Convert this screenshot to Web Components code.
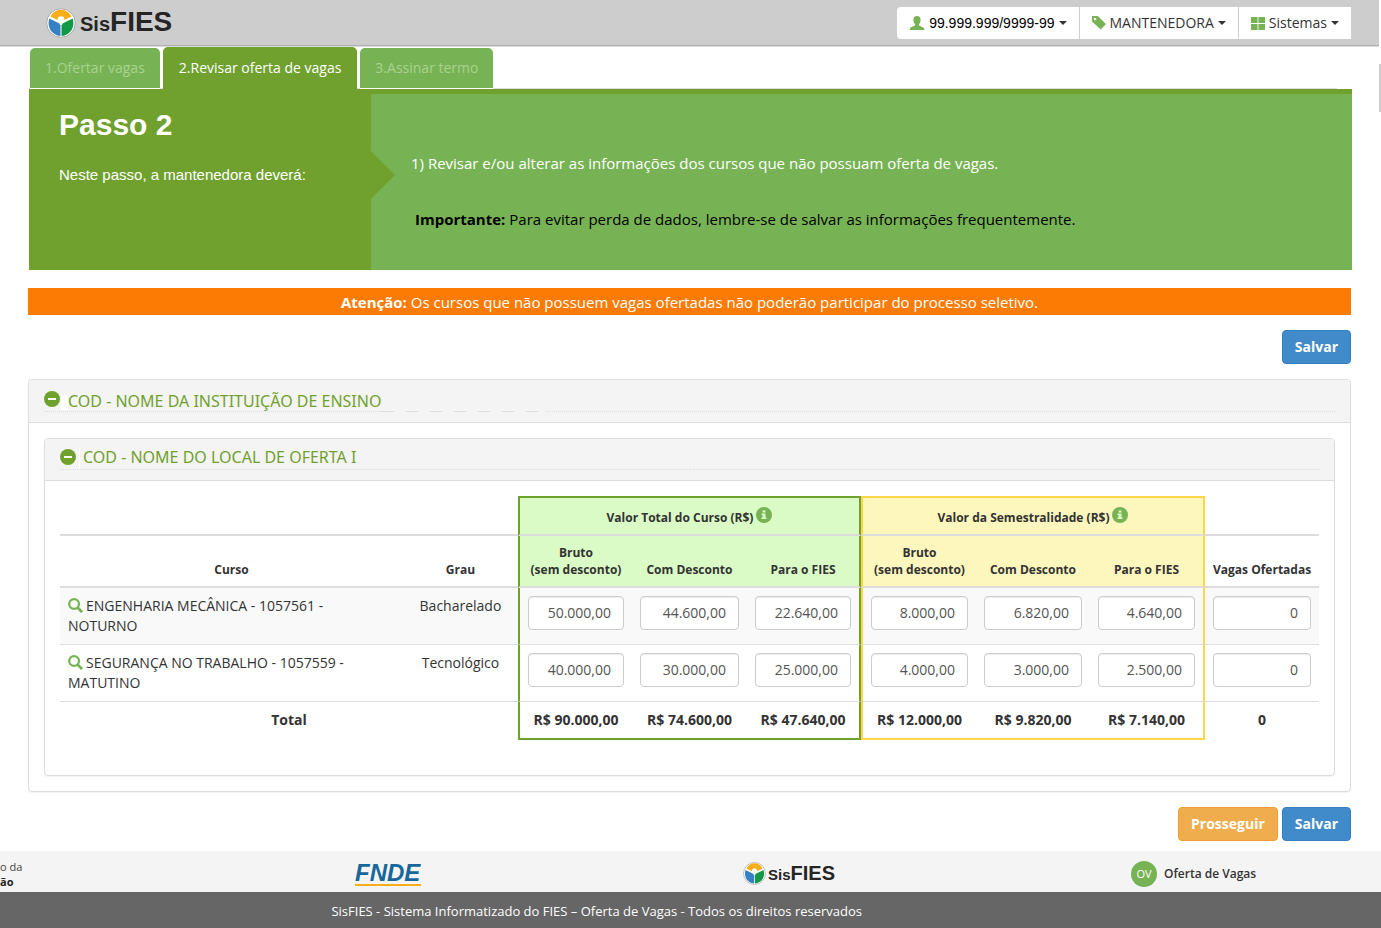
<!DOCTYPE html>
<html lang="pt-BR">
<head>
<meta charset="utf-8">
<title>SisFIES - Oferta de Vagas</title>
<style>
body{margin:0;font:14px/20px "Open Sans",sans-serif;color:#333;background:#fff}
</style>
</head>
<body>
<sis-app></sis-app>
<script>
const define=(name,html,setup)=>{
  const t=document.createElement('template');t.innerHTML=html;
  customElements.define(name,class extends HTMLElement{
    constructor(){super();this.attachShadow({mode:'open'}).append(t.content.cloneNode(true))}
    connectedCallback(){if(setup&&!this.ready){this.ready=true;setup(this,this.shadowRoot)}}
  });
};
const ICONS={
  user:'<path d="M8 1c2.300 0 3.600 1.600 3.600 3.900 0 1.900-.7 3.500-1.700 4.300v1.100c.5.900 4.300 1.500 5.100 3.200.2.500.3 1 .3 1.500H.7c0-.5.1-1 .3-1.500.8-1.700 4.600-2.300 5.100-3.200V9.200C5.100 8.400 4.400 6.800 4.400 4.900 4.400 2.600 5.700 1 8 1z"/>',
  tag:'<path fill-rule="evenodd" d="M0 0h6.500L16 9l-6 6.300L0 6.300zM3.500 1.900a1.500 1.500 0 1 0 0 3 1.500 1.500 0 0 0 0-3z"/>',
  grid:'<path d="M0 1h7.500v7H0zM8.500 1H16v7H8.500zM0 9h7.500v7H0zM8.500 9H16v7H8.500z"/>',
  minus:'<circle cx="8" cy="8" r="8"/><path fill="#fff" d="M4 7h8v2H4z"/>',
  info:'<circle cx="8" cy="8" r="8"/><path fill="#dafac6" d="M6.500 3.500h3v2h-3zM5.500 6.500h4v4h1V12h-5v-1.500h1V8h-1z"/>',
  search:'<circle cx="6.500" cy="6.500" r="5.200" fill="none" stroke="currentColor" stroke-width="2.400"/><path d="M10 10l5 5" fill="none" stroke="currentColor" stroke-width="3"/>'
};
define('sis-icon',`<style>:host{display:inline-block;width:16px;height:16px;color:#77b354}svg{display:block;width:100%;height:100%;fill:currentColor}</style><svg viewBox="0 0 16 16" aria-hidden="true"></svg>`,
 (h,r)=>{r.querySelector('svg').innerHTML=ICONS[h.getAttribute('name')]});

define('sis-logo',`<style>
:host{display:flex;align-items:center;gap:4px;color:#252525;font-family:"Liberation Sans",sans-serif;font-weight:bold;--mark:30px;--small:20px;--big:28px}
svg{width:var(--mark);height:var(--mark);flex:none}
span{font-size:var(--small);line-height:30px;white-space:nowrap}b{font-size:var(--big)}
:host([small]){--mark:23px;--small:15px;--big:20px;gap:2px}
</style><svg viewBox="0 0 30 30" aria-hidden="true"><circle cx="15" cy="15" r="14.300" fill="#fff" stroke="#aaa"/>
<path fill="#f9ae17" d="M4.500 8.500C9-.6 21-.6 25.500 8.500L18.500 12a3.800 3.800 0 0 0-7 0z"/>
<path fill="#3581c4" d="M3.300 10.500 14.500 16v12C6 27.500.5 19.500 3.300 10.500z"/>
<path fill="#119947" d="M26.700 10.500 15.500 16v12C24 27.500 29.500 19.500 26.700 10.500z"/><circle cx="15" cy="11.500" r="3.300" fill="#fff"/><path fill="#fff" d="M12.500 12h5L16 17h-2z"/></svg><span>Sis<b>FIES</b></span>`);

define('sis-menu',`<style>
:host{display:block}
button{display:flex;align-items:center;gap:4px;height:32px;width:100%;padding:0 12px;border:0;background:#fff;color:#333;font:14px/20px "Open Sans",sans-serif;white-space:nowrap}
sis-icon{width:14px;height:14px}
:host([plain]) button{color:#000;font-family:"Liberation Sans",sans-serif}
:host([plain]) sis-icon{width:16px;height:16px}
i{border:4px solid transparent;border-top-color:currentColor;border-bottom:0;color:#333}
</style><button type="button" aria-haspopup="true"><sis-icon></sis-icon><slot></slot><i></i></button>`,
(h,r)=>{const i=document.createElement('sis-icon');i.setAttribute('name',h.getAttribute('icon'));r.querySelector('sis-icon').replaceWith(i)});

define('sis-header',`<style>
:host{display:flex;justify-content:space-between;align-items:center;height:45px;margin-right:2px;padding:0 28px 0 46px;background:#cdcdcd;border-bottom:1px solid #b0b0b0;box-shadow:0 1px #ddd}
nav{display:flex;gap:1px;border-radius:4px 0 0 4px;overflow:hidden}
</style><sis-logo></sis-logo><nav aria-label="Conta"><sis-menu plain icon="user">99.999.999/9999-99</sis-menu><sis-menu icon="tag">MANTENEDORA</sis-menu><sis-menu icon="grid">Sistemas</sis-menu></nav>`);

define('sis-tab',`<style>
:host{display:block}
a{display:block;height:40px;padding:0 15px;line-height:40px;border-radius:5px 5px 0 0;background:#77b354;color:#a9d28f;text-decoration:none;white-space:nowrap}
:host([active]) a{height:42px;padding:0 16px;line-height:42px;background:#70a12f;color:#fff}
</style><a href="#"><slot></slot></a>`);
define('sis-tabs',`<style>
:host{display:flex;align-items:flex-start;gap:3px;height:42px;padding-left:1px;margin-right:15px;box-shadow:inset 0 -1px #ddd}
sis-tab:not([active]){border-top:1px solid #fff;border-bottom:1px solid #fff}
</style><sis-tab>1.Ofertar vagas</sis-tab><sis-tab active>2.Revisar oferta de vagas</sis-tab><sis-tab>3.Assinar termo</sis-tab>`);

define('sis-step',`<style>
:host{display:grid;grid-template-columns:342px 1fr;min-height:176px;border-top:5px solid #70a12f;background:#77b354;color:#fff}
.left{position:relative;background:#70a12f;padding:16px 30px;font:15px/20px "Liberation Sans",sans-serif}
.left::after{content:"";position:absolute;left:100%;top:57px;border:24px solid transparent;border-left-color:#70a12f;border-right:0}
h1{margin:0 0 25px;font-size:30px;line-height:30px}p{margin:0}
.right{padding:59px 40px 0;font-size:15px;line-height:20px}
.note{margin-top:36px;padding-left:4px;color:#000}
</style><div class="left"><h1>Passo 2</h1><p>Neste passo, a mantenedora deverá:</p></div>
<div class="right"><p>1) Revisar e/ou alterar as informações dos cursos que não possuam oferta de vagas.</p><p class="note"><b>Importante:</b> Para evitar perda de dados, lembre-se de salvar as informações frequentemente.</p></div>`);

define('sis-alert',`<style>:host{display:block;padding:4px 0 3px;background:#fb7b05;color:#fff;text-align:center;font-size:15px;line-height:20px}</style><slot></slot>`);

define('sis-button',`<style>:host{display:block}
button{height:34px;padding:0 12px;border:1px solid #357ebd;border-radius:4px;background:#428bca;color:#fff;font:bold 14px/20px "Open Sans",sans-serif}
:host([warn]) button{background:#f0ad4e;border-color:#eea236}</style><button type="button"><slot></slot></button>`);

define('sis-panel',`<style>
:host{display:block;border:1px solid #ddd;border-radius:4px;box-shadow:0 1px 1px rgba(0,0,0,.05);background:#fff}
header{padding:10px 15px;background:#f4f4f4;border-bottom:1px solid #ddd;border-radius:3px 3px 0 0}
h2{display:flex;height:20px;margin:0;color:#70a12f;font:16px/16px "Noto Sans",sans-serif}
h2 i{width:1px;height:20px;margin:0 3px;background:#fff}
sis-icon{color:#70a12f}
.rule{display:flex}
.rule i{flex:1;border-bottom:1px dotted #ddd}
.rule .dash{display:none}
:host([outer]) .rule .lead{flex:0 0 338px}
:host([outer]) .rule .dash{display:block;flex:0 0 164px;border:0;height:1px;background:repeating-linear-gradient(90deg,#ddd 0 12px,transparent 12px 24px)}
:host([outer]) h2{padding-top:1px;line-height:20px}
:host([outer]) h2 i{width:7px;height:15px;margin:4px 0 0 1px}
main{padding:15px}
</style><header><h2><sis-icon name="minus"></sis-icon><i></i><span></span></h2><div class="rule"><i class="lead"></i><i class="dash"></i><i></i></div></header><main><slot></slot></main>`,
(h,r)=>{r.querySelector('h2 span').textContent=h.getAttribute('heading')});

define('sis-courses',`<style>
:host{display:block}
table{width:100%;table-layout:fixed;border-collapse:separate;border-spacing:0;text-align:center}
.w114{width:114px}.w115{width:115px}
th,td{padding:8px;border-bottom:1px solid #ddd;vertical-align:top}
thead th{border-bottom:2px solid #ddd;vertical-align:bottom;font-size:12px;line-height:17px;white-space:nowrap}
thead tr:first-child th{height:20px;line-height:20px;padding:9px 8px 6px}
thead tr:last-child th{height:34px}
tbody tr:first-child td{background:#f9f9f9}
tbody td{height:40px}
.name{text-align:left}
.gl{border-left:2px solid #70a12f}.gr{border-right:2px solid #70a12f}
.yl{border-left:2px solid #ffd54a}.yr{border-right:2px solid #ffd54a}
thead .g{background:#dafac6}thead .y{background:#fdf6bd}
thead tr:first-child .g{border-top:2px solid #70a12f}thead tr:first-child .y{border-top:2px solid #ffd54a}
tfoot th,tfoot td{height:20px;border-bottom:2px solid transparent;font-weight:bold;white-space:nowrap}
tfoot .g{border-bottom-color:#70a12f}tfoot .y{border-bottom-color:#ffd54a}
input{display:block;box-sizing:border-box;width:100%;height:34px;padding:5px 12px 7px;border:1px solid #ccc;border-radius:4px;box-shadow:inset 0 1px 1px rgba(0,0,0,.075);background:#fff;color:#555;font:14px/20px "Open Sans",sans-serif;text-align:right}
.name sis-icon{width:15px;height:15px;margin-right:3px;vertical-align:-2px}
thead sis-icon{vertical-align:-1px;margin-left:3px}
</style><table>
<colgroup><col><col class="w115"><col class="w114"><col class="w115"><col class="w114"><col class="w115"><col class="w114"><col class="w115"><col class="w114"></colgroup>
<thead><tr><th></th><th></th><th colspan="3" class="g gl gr">Valor Total do Curso (R$)<sis-icon name="info"></sis-icon></th><th colspan="3" class="y yl yr">Valor da Semestralidade (R$)<sis-icon name="info"></sis-icon></th><th></th></tr>
<tr><th>Curso</th><th>Grau</th><th class="g gl">Bruto<br>(sem desconto)</th><th class="g">Com Desconto</th><th class="g gr">Para o FIES</th><th class="y yl">Bruto<br>(sem desconto)</th><th class="y">Com Desconto</th><th class="y yr">Para o FIES</th><th>Vagas Ofertadas</th></tr></thead>
<tbody></tbody>
<tfoot><tr><th colspan="2">Total</th><td class="g gl">R$ 90.000,00</td><td class="g">R$ 74.600,00</td><td class="g gr">R$ 47.640,00</td><td class="y yl">R$ 12.000,00</td><td class="y">R$ 9.820,00</td><td class="y yr">R$ 7.140,00</td><td>0</td></tr></tfoot></table>`,
(h,r)=>{
  const cls=['g gl','g','g gr','y yl','y','y yr',''];
  const labels=['Valor total bruto','Valor total com desconto','Valor total para o FIES','Semestralidade bruta','Semestralidade com desconto','Semestralidade para o FIES','Vagas ofertadas'];
  r.querySelector('tbody').innerHTML=[
    ['ENGENHARIA MECÂNICA - 1057561 -','NOTURNO','Bacharelado','50.000,00','44.600,00','22.640,00','8.000,00','6.820,00','4.640,00','0'],
    ['SEGURANÇA NO TRABALHO - 1057559 -','MATUTINO','Tecnológico','40.000,00','30.000,00','25.000,00','4.000,00','3.000,00','2.500,00','0']
  ].map(([a,b,g,...v])=>`<tr><td class="name"><sis-icon name="search"></sis-icon>${a}<br>${b}</td><td>${g}</td>${v.map((x,i)=>`<td class="${cls[i]}"><input type="text" aria-label="${labels[i]}" value="${x}"></td>`).join('')}</tr>`).join('');
});

define('sis-footer',`<style>
:host{display:block;overflow:hidden}
.brands{display:grid;grid-template-columns:355fr 388fr 388fr 250fr;align-items:center;height:41px;box-sizing:border-box;padding-top:4px;background:#f4f4f4}
.mec{display:grid;font-size:11px;line-height:15px;color:#444}.mec b{color:#222}
.fnde{justify-self:start;border-bottom:2px solid #fbae17;color:#17679b;font:italic bold 24px/22px "Liberation Sans",sans-serif;width:66px}
.ov{display:flex;align-items:center;gap:7px;font-weight:600;font-size:12px}
.ov span{width:26px;height:26px;border-radius:50%;background:#77b354;color:#fff;text-align:center;font:11px/26px "Open Sans",sans-serif}
.legal{height:36px;box-sizing:border-box;padding:9px 0 7px 24%;background:#666;color:#fff;font-size:13px;line-height:20px}
</style><div class="brands"><div class="mec"><span>o da</span><b>ão</b></div><div class="fnde">FNDE</div><sis-logo small></sis-logo><div class="ov"><span>OV</span>Oferta de Vagas</div></div>
<div class="legal">SisFIES - Sistema Informatizado do FIES – Oferta de Vagas - Todos os direitos reservados</div>`);

define('sis-app',`<style>
:host{display:block;position:relative}
.thumb{position:absolute;right:0;top:64px;width:2px;height:48px;background:#cdcdcd}
.steps{margin:1px 29px 18px}
.content{margin:0 30px 0 28px}
.actions{display:flex;justify-content:flex-end;gap:4px;margin:15px 0}
.actions.end{margin-bottom:10px}
.inner{padding-bottom:20px}
</style><sis-header></sis-header><div class="thumb" aria-hidden="true"></div>
<div class="steps"><sis-tabs></sis-tabs><sis-step></sis-step></div>
<div class="content"><sis-alert><b>Atenção:</b> Os cursos que não possuem vagas ofertadas não poderão participar do processo seletivo.</sis-alert>
<div class="actions"><sis-button>Salvar</sis-button></div>
<sis-panel outer heading="COD - NOME DA INSTITUIÇÃO DE ENSINO"><sis-panel heading="COD - NOME DO LOCAL DE OFERTA I"><div class="inner"><sis-courses></sis-courses></div></sis-panel></sis-panel>
<div class="actions end"><sis-button warn>Prosseguir</sis-button><sis-button>Salvar</sis-button></div></div>
<sis-footer></sis-footer>`);
</script>
</body>
</html>
